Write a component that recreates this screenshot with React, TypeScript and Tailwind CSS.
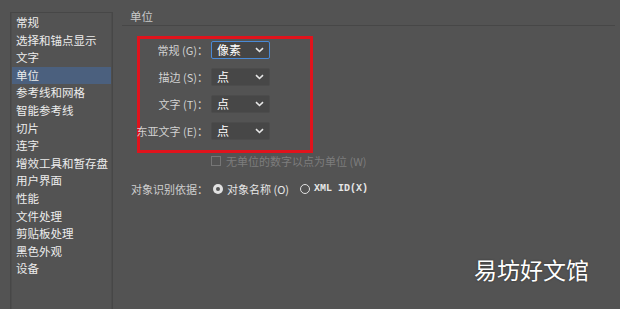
import React from "react";

const items = [
  "常规",
  "选择和锚点显示",
  "文字",
  "单位",
  "参考线和网格",
  "智能参考线",
  "切片",
  "连字",
  "增效工具和暂存盘",
  "用户界面",
  "性能",
  "文件处理",
  "剪贴板处理",
  "黑色外观",
  "设备",
];

const rows = [
  { label: "常规 (G)：", value: "像素", active: true },
  { label: "描边 (S)：", value: "点", active: false },
  { label: "文字 (T)：", value: "点", active: false },
  { label: "东亚文字 (E)：", value: "点", active: false },
];

function Chevron() {
  return (
    <svg width="9" height="6" viewBox="0 0 9 6" className="shrink-0">
      <path d="M1 1.2 L4.5 4.5 L8 1.2" fill="none" stroke="#e6e6e6" strokeWidth="1.6" />
    </svg>
  );
}

export default function App() {
  return (
    <div
      className="relative w-[620px] h-[309px] bg-[#535353] flex overflow-hidden"
      style={{ fontFamily: '"Noto Sans CJK SC", "Noto Sans", sans-serif' }}
    >
      {/* Sidebar */}
      <div className="ml-[10px] mt-[12px] w-[103px] h-[310px] border-l border-r border-t border-[#474747] flex">
        <div className="flex-1 border-l border-r border-[#4d4d4d] pt-[1px] flex flex-col">
          {items.map((t) => (
            <div
              key={t}
              className={`h-[17.6px] flex items-center pl-[4px] text-[11.5px] leading-none whitespace-nowrap text-[#ececec] ${
                t === "单位" ? "bg-[#4b607e]" : ""
              }`}
            >
              {t}
            </div>
          ))}
        </div>
      </div>

      {/* Main */}
      <div className="ml-[9px] flex-1 flex flex-col">
        <div className="h-[26px] pl-[8px] pt-[11px] text-[11.5px] leading-none text-[#c9c9c9] border-b border-[#474747] mr-[5px]">
          单位
        </div>

        <div className="ml-[15px] mt-[10px] w-[176px] h-[117px] border-[3px] border-[#e0131c] flex flex-col gap-[9px] pt-[2px]">
          {rows.map((r) => (
            <div key={r.label} className="flex items-center h-[18px]">
              <div className="w-[68px] flex justify-end whitespace-nowrap text-[11px] leading-none text-[#d2d2d2]">
                <span className="whitespace-nowrap">{r.label}</span>
              </div>
              <div
                className={`ml-[3px] w-[59px] h-[18px] rounded-[2px] flex items-center justify-between pl-[5px] pr-[5px] text-[12px] leading-none text-white ${
                  r.active ? "bg-[#454545] border border-[#4a8ad6]" : "bg-[#474747] border border-[#4c4c4c]"
                }`}
              >
                <span>{r.value}</span>
                <Chevron />
              </div>
            </div>
          ))}
        </div>

        <div className="ml-[89px] mt-[2px] h-[12px] flex items-center gap-[5px]">
          <div className="w-[10px] h-[10px] border border-[#767676]" />
          <span className="text-[11px] leading-none text-[#7d7d7d] whitespace-nowrap">
            无单位的数字以点为单位 (W)
          </span>
        </div>

        <div className="ml-[9px] mt-[15px] h-[14px] flex items-center text-[11px] leading-none whitespace-nowrap">
          <span className="text-[#cfcfcf]">对象识别依据：</span>
          <div className="ml-[5px] w-[10px] h-[10px] rounded-full bg-[#e2e2e2] flex items-center justify-center">
            <div className="w-[4px] h-[4px] rounded-full bg-[#555555]" />
          </div>
          <span className="ml-[4px] text-[#e6e6e6]">对象名称 (O)</span>
          <div className="ml-[11px] w-[10px] h-[10px] rounded-full border border-[#e2e2e2]" />
          <span
            className="ml-[4px] text-[10px] text-[#e6e6e6] font-bold"
            style={{ fontFamily: '"Liberation Mono", monospace' }}
          >
            XML ID(X)
          </span>
        </div>
      </div>

      <div
        className="absolute left-[474px] top-[258px] text-[23px] leading-none text-white whitespace-nowrap"
        style={{ textShadow: "0 0 2px rgba(0,0,0,0.5)" }}
      >
        易坊好文馆
      </div>
    </div>
  );
}
